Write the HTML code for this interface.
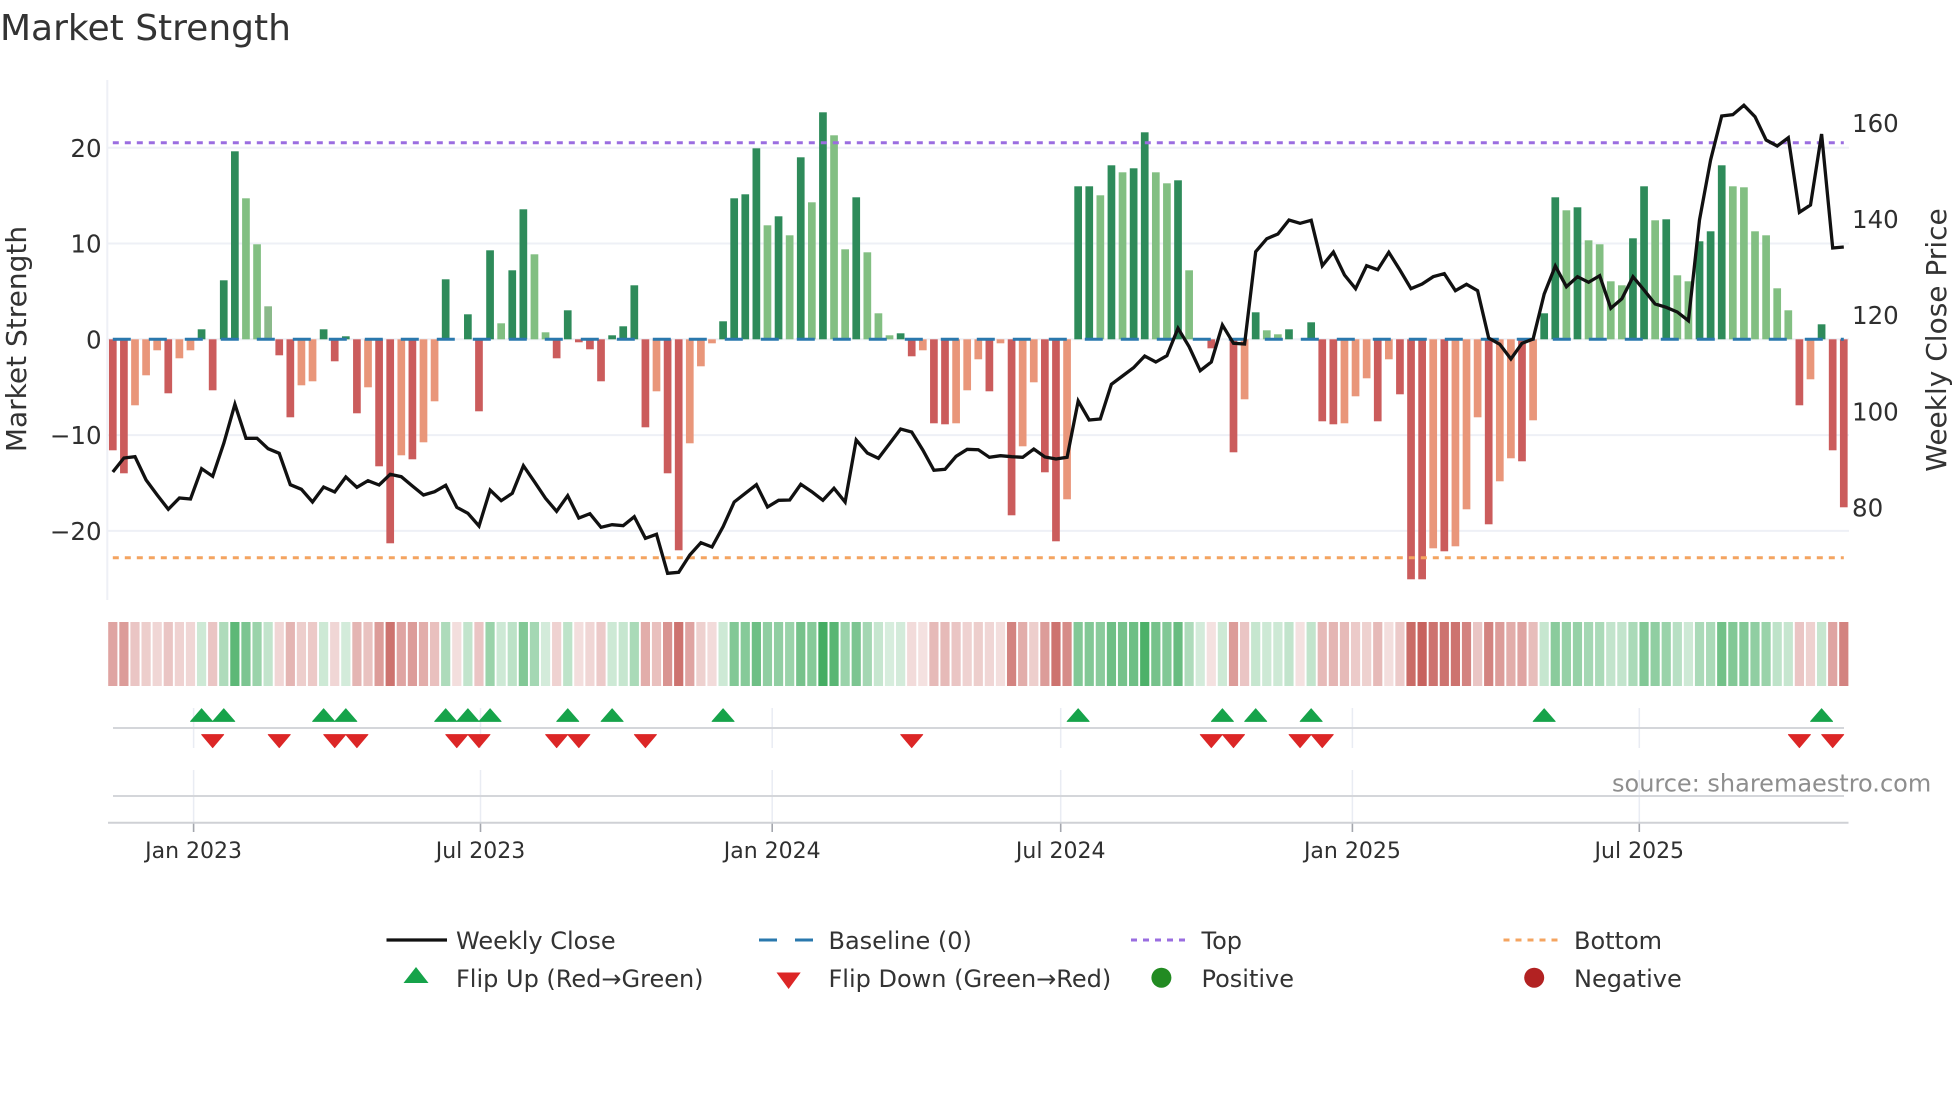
<!DOCTYPE html>
<html lang="en">
<head>
<meta charset="utf-8">
<title>Market Strength</title>
<style>
html,body{margin:0;padding:0;background:#fff;width:1960px;height:1102px;overflow:hidden}
svg{display:block}
text{font-family:"DejaVu Sans","Liberation Sans",sans-serif;fill:#333}
.yt{font-size:24.5px;fill:#2f2f2f}
.xt{font-size:22px;fill:#2f2f2f;text-anchor:middle}
.lg{font-size:24px;fill:#333}
</style>
</head>
<body>
<svg id="c" xmlns="http://www.w3.org/2000/svg" width="1960" height="1102" viewBox="0 0 1960 1102">
<rect width="1960" height="1102" fill="#fff"/>
<g id="grid"></g>
<g id="bars"></g>
<g id="heat"></g>
<line x1="112.8" x2="1843.8" y1="339.3" y2="339.3" stroke="#2a78ad" stroke-width="3" stroke-dasharray="18 18"/>
<line x1="112.8" x2="1843.8" y1="142.7" y2="142.7" stroke="#9a6de0" stroke-width="3" stroke-dasharray="6 6"/>
<line x1="112.8" x2="1843.8" y1="557.7" y2="557.7" stroke="#f4a460" stroke-width="3" stroke-dasharray="6 6"/>
<polyline id="price" fill="none" stroke="#111" stroke-width="3.3" stroke-linejoin="miter"/>
<g id="marks"></g>

<text x="0" y="40" style="font-size:36px;fill:#333">Market Strength</text>
<text transform="translate(26,339) rotate(-90)" text-anchor="middle" style="font-size:28px;fill:#333">Market Strength</text>
<text transform="translate(1946,340) rotate(-90)" text-anchor="middle" style="font-size:28px;fill:#333">Weekly Close Price</text>

<text class="yt" x="101.6" y="157" text-anchor="end">20</text>
<text class="yt" x="101.6" y="252.5" text-anchor="end">10</text>
<text class="yt" x="101.6" y="348.3" text-anchor="end">0</text>
<text class="yt" x="101.6" y="444" text-anchor="end">−10</text>
<text class="yt" x="101.6" y="540" text-anchor="end">−20</text>

<text class="yt" x="1852" y="132">160</text>
<text class="yt" x="1852" y="228">140</text>
<text class="yt" x="1852" y="324">120</text>
<text class="yt" x="1852" y="420.5">100</text>
<text class="yt" x="1852" y="516.7">80</text>

<text class="xt" x="193.6" y="858">Jan 2023</text>
<text class="xt" x="480.5" y="858">Jul 2023</text>
<text class="xt" x="772.2" y="858">Jan 2024</text>
<text class="xt" x="1060.7" y="858">Jul 2024</text>
<text class="xt" x="1352.4" y="858">Jan 2025</text>
<text class="xt" x="1639.3" y="858">Jul 2025</text>

<text x="1612" y="791.5" style="font-size:24px;fill:#8e8e8e">source: sharemaestro.com</text>

<line x1="386.5" x2="447" y1="940" y2="940" stroke="#111" stroke-width="3.3"/>
<line x1="759" x2="813" y1="940" y2="940" stroke="#2a78ad" stroke-width="3" stroke-dasharray="18 18"/>
<line x1="1131" x2="1187" y1="940" y2="940" stroke="#9a6de0" stroke-width="3" stroke-dasharray="6 6"/>
<line x1="1503.5" x2="1559" y1="940" y2="940" stroke="#f4a460" stroke-width="3" stroke-dasharray="6 6"/>
<polygon points="416,967 428.5,983 403.5,983" fill="#16a34a"/>
<polygon points="776.5,972.5 800.7,972.5 788.6,989" fill="#dc2626"/>
<circle cx="1161.4" cy="977.7" r="10" fill="#228b22"/>
<circle cx="1534.2" cy="977.7" r="10" fill="#b22222"/>

<text class="lg" x="456" y="949">Weekly Close</text>
<text class="lg" x="828.5" y="949">Baseline (0)</text>
<text class="lg" x="1201.5" y="949">Top</text>
<text class="lg" x="1574" y="949">Bottom</text>
<text class="lg" x="456" y="987">Flip Up (Red→Green)</text>
<text class="lg" x="828.5" y="987">Flip Down (Green→Red)</text>
<text class="lg" x="1201.5" y="987">Positive</text>
<text class="lg" x="1574" y="987">Negative</text>
</svg>
<script>
(function(){
var NS="http://www.w3.org/2000/svg",P=11.096,X0=112.8,Z=339.3;
function el(parent,tag,a){var e=document.createElementNS(NS,tag);for(var k in a)e.setAttribute(k,a[k]);document.getElementById(parent).appendChild(e);return e;}
var v=[-111,-134,-66,-36,-11,-54,-19,-11,10,-51,
59,188,141,95,33,-16,-78,-46,-42,10,
-22,3,-74,-48,-127,-204,-116,-120,-103,-62,
60,0,25,-72,89,16,69,130,85,7,
-19,29,-3,-10,-42,4,13,54,-88,-52,
-134,-211,-104,-27,-4,18,141,145,191,114,
123,104,182,137,227,204,90,142,87,26,
4,6,-17,-11,-84,-85,-84,-51,-20,-52,
-4,-176,-107,-43,-133,-202,-160,153,153,144,
174,167,171,207,167,156,159,69,0,-9,
0,-113,-60,27,9,5,10,0,17,-82,
-85,-84,-57,-39,-82,-20,-55,-240,-240,-209,
-212,-207,-170,-78,-185,-142,-119,-122,-81,26,
142,129,132,99,95,58,54,101,153,119,
120,64,58,98,108,174,153,152,108,104,
51,29,-66,-40,15,-111,-168];
var light={};[2,3,4,6,7,12,13,14,17,18,23,26,28,29,35,38,39,49,52,53,54,59,61,63,65,66,68,69,70,73,76,77,78,80,82,83,86,89,91,94,95,97,102,104,105,111,112,113,115,119,121,122,123,125,126,128,131,133,134,135,136,139,141,142,146,147,148,149,150,151,153].forEach(function(i){light[i]=1;});
var h=[-.55,-.6,-.35,-.3,-.25,-.35,-.27,-.25,.25,-.35,
.4,.8,.65,.5,.3,-.25,-.45,-.3,-.33,.25,
-.25,.22,-.45,-.37,-.6,-.85,-.55,-.6,-.5,-.38,
.4,-.2,.3,-.35,.5,.25,.33,.62,.45,.22,
-.27,.32,-.2,-.25,-.32,.25,.28,.42,-.5,-.38,
-.65,-.85,-.55,-.28,-.22,.25,.62,.6,.72,.55,
.55,.5,.68,.6,.92,.82,.5,.65,.45,.28,
.2,.22,-.22,-.18,-.42,-.42,-.35,-.27,-.3,-.25,
-.2,-.75,-.5,-.3,-.6,-.85,-.7,.62,.62,.58,
.72,.68,.72,.88,.68,.62,.75,.4,.22,-.18,
.25,-.6,-.35,.28,.25,.25,.3,-.18,.3,-.42,
-.45,-.42,-.32,-.28,-.42,-.2,-.32,-.9,-.95,-.85,
-.85,-.85,-.75,-.35,-.75,-.6,-.5,-.55,-.4,.28,
.58,.52,.52,.45,.42,.3,.3,.42,.62,.55,
.5,.35,.25,.42,.42,.7,.62,.62,.55,.5,
.32,.28,-.35,-.28,.28,-.55,-.75];
var pz=[516,474,470,540,585,628,594,597,506,529,430,313,415,415,446,460,554,568,606,561,576,531,562,542,555,523,530,558,585,575,556,622,640,678,570,602,580,497,545,595,634,587,654,641,682,674,677,650,715,703,
820,817,765,728,741,680,606,580,554,621,601,600,553,575,601,565,606,420,459,475,431,387,396,450,511,508,469,448,449,472,467,470,472,447,471,477,472,303,360,357,253,228,203,168,186,167,85,140,212,186,75,130,132];
var pr=[251.7,238.7,234,220,223.3,220.3,265.7,252,275,288.7,265.7,269.7,252.3,270,288.7,284,276.7,273.7,290.7,284.3,290.7,338,344.3,359,343.3,339,294,266,286.7,276.7,282.3,275.7,308.3,298.7,276.7,290,304,307.3,312,320.7,220,160,116,114.7,105.3,116.7,140,146,137.7,212.3,205,134,248,247];
var py=pz.map(function(z){return 300+z/3;}).concat(pr);

/* grid */
[147.7,243.5,435.1,530.9].forEach(function(y){el("grid","line",{x1:107,x2:1849,y1:y,y2:y,stroke:"#eef0f6","stroke-width":2});});
el("grid","line",{x1:107,x2:1849,y1:Z,y2:Z,stroke:"#eef0f6","stroke-width":2});
el("grid","line",{x1:107.3,x2:107.3,y1:80,y2:600,stroke:"#eef0f6","stroke-width":2});
[193.6,480.5,772.2,1060.7,1352.4,1639.3].forEach(function(x){
  el("grid","line",{x1:x,x2:x,y1:708,y2:748,stroke:"#e9ecf3","stroke-width":1.5});
  el("grid","line",{x1:x,x2:x,y1:770,y2:822,stroke:"#e9ecf3","stroke-width":1.5});
  el("grid","line",{x1:x,x2:x,y1:823,y2:832,stroke:"#a3a6ad","stroke-width":1.6});
});
el("grid","line",{x1:113,x2:1844,y1:728,y2:728,stroke:"#d4d6da","stroke-width":2});
el("grid","line",{x1:113,x2:1844,y1:796,y2:796,stroke:"#d4d6da","stroke-width":2});
el("grid","line",{x1:108,x2:1848.5,y1:822.7,y2:822.7,stroke:"#cfd1d5","stroke-width":2});

/* bars */
v.forEach(function(val,i){
  if(!val)return;
  var x=X0+i*P-3.85,c;
  if(val>0)c=light[i]?"#82bf82":"#2e8b5a";else c=light[i]?"#e9967a":"#cb5c5c";
  if(i===14)c="#8ab98a";
  el("bars","rect",{x:x.toFixed(2),y:(val>0?Z-val:Z).toFixed(2),width:7.7,height:Math.abs(val),fill:c});
});

/* heat strip */
function mix(a,b){return Math.round(255+(b-255)*a);}
h.forEach(function(a,i){
  var base=a>0?[53,166,85]:[196,90,85],t=Math.abs(a);
  var c="rgb("+mix(t,base[0])+","+mix(t,base[1])+","+mix(t,base[2])+")";
  el("heat","rect",{x:(X0+i*P-4.6).toFixed(2),y:622,width:9.2,height:64,fill:c});
});

/* price */
document.getElementById("price").setAttribute("points",py.map(function(y,i){return (X0+i*P).toFixed(1)+","+y.toFixed(1);}).join(" "));

/* flips */
[8,10,19,21,30,32,34,41,45,55,87,100,103,108,129,154].forEach(function(i){
  var x=X0+i*P;
  el("marks","polygon",{points:(x)+",708.8 "+(x+11)+",721.4 "+(x-11)+",721.4",fill:"#16a34a",stroke:"#16a34a","stroke-width":1,"stroke-linejoin":"round"});
});
[9,15,20,22,31,33,40,42,48,72,99,101,107,109,152,155].forEach(function(i){
  var x=X0+i*P;
  el("marks","polygon",{points:(x-11)+",734.6 "+(x+11)+",734.6 "+(x)+",747.6",fill:"#dc2626",stroke:"#dc2626","stroke-width":1,"stroke-linejoin":"round"});
});
})();
</script>
</body>
</html>
